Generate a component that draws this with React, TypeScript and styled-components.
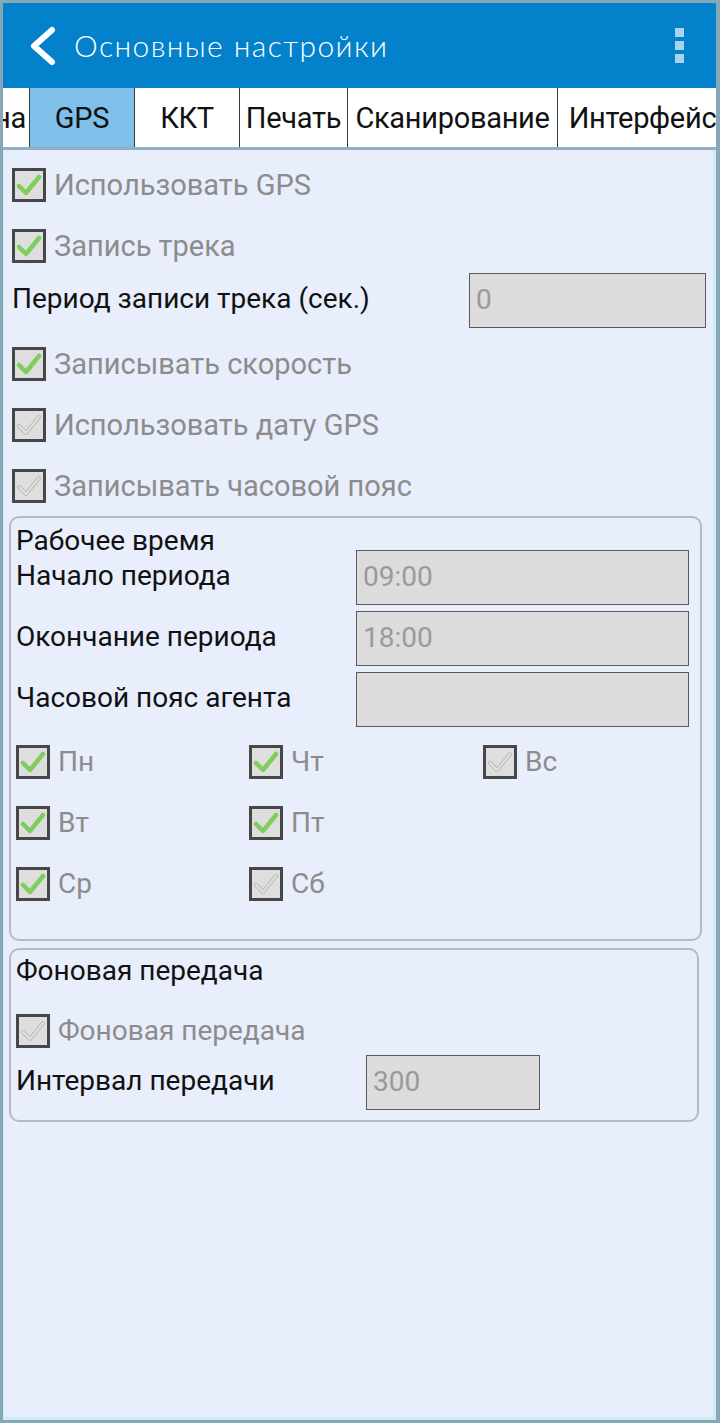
import React from "react";
import styled, { createGlobalStyle } from "styled-components";

const GlobalStyle = createGlobalStyle`
  html, body {
    margin: 0;
    padding: 0;
    background: #86a7b8;
  }
  * {
    box-sizing: border-box;
  }
`;

const Frame = styled.div`
  height: 1423px;
  padding: 3px 4px 3px 3px;
  display: flex;
  flex-direction: column;
  font-family: Roboto, "Noto Sans", sans-serif;
`;

const Header = styled.div`
  height: 85px;
  background: #0481cb;
  display: flex;
  align-items: center;
  padding: 0 0 0 22px;
  color: #fff;
`;

const Title = styled.div`
  flex: 1;
  margin-left: 13px;
  font-family: Lato, "Open Sans", sans-serif;
  font-weight: 300;
  font-size: 30px;
  letter-spacing: 1.4px;
  padding-bottom: 2px;
`;

const MenuDots = styled.div`
  width: 40px;
  display: flex;
  flex-direction: column;
  align-items: center;
  gap: 4px;
  margin-right: 17px;

  span {
    width: 9px;
    height: 9px;
    background: #a9d4f0;
  }
`;

const TabStrip = styled.div`
  background: #fff;
  display: flex;
  overflow: hidden;
  border-bottom: 3px solid #8fb0c1;
  height: 62px;
`;

const Tab = styled.div<{ $w: number; $active?: boolean; $clip?: boolean }>`
  flex: 0 0 ${(p) => p.$w}px;
  display: flex;
  align-items: center;
  justify-content: ${(p) => (p.$clip ? "flex-end" : "center")};
  overflow: hidden;
  white-space: nowrap;
  border-right: 1px solid #3a3a3a;
  background: ${(p) => (p.$active ? "#7ec0e9" : "#fff")};
  color: #111;
  font-size: 29px;
  letter-spacing: -0.3px;
  padding-right: ${(p) => (p.$clip ? "3px" : "0")};
`;

const Content = styled.div`
  flex: 1;
  background: #e8eefb;
  border-left: 1px solid #c9ecf5;
  border-right: 3px solid #c9ecf5;
  border-bottom: 3px solid #c9ecf5;
  padding: 4px 11px 0 8px;
`;

const CheckRow = styled.div`
  height: 61px;
  display: flex;
  align-items: center;
  gap: 8px;
`;

const Box = styled.div`
  width: 34px;
  height: 34px;
  border: 3px solid #474747;
  background: #dedede;
  display: flex;
  align-items: center;
  justify-content: center;
  flex: 0 0 auto;
`;

const CheckLabel = styled.span<{ $size?: number }>`
  color: #8c8c8c;
  font-size: ${(p) => p.$size ?? 29}px;
  white-space: nowrap;
`;

const FieldRow = styled.div<{ $labelW: number; $top?: number; $bottom?: number }>`
  display: grid;
  grid-template-columns: ${(p) => p.$labelW}px auto;
  align-items: center;
  height: 55px;
  margin-top: ${(p) => p.$top ?? 0}px;
  margin-bottom: ${(p) => p.$bottom ?? 0}px;
`;

const FieldLabel = styled.span<{ $size?: number }>`
  color: #111;
  font-size: ${(p) => p.$size ?? 28}px;
  white-space: nowrap;
  padding-bottom: 4px;
`;

const Input = styled.div<{ $w: number }>`
  width: ${(p) => p.$w}px;
  height: 55px;
  border: 1.5px solid #5a5a5a;
  background: #dcdcdc;
  color: #9a9a9a;
  font-size: 28px;
  display: flex;
  align-items: center;
  padding: 0 6px 2px;
`;

const Group = styled.div<{ $right: number; $top?: number }>`
  border: 2px solid #b3bcc6;
  border-radius: 10px;
  margin: ${(p) => p.$top ?? 0}px ${(p) => p.$right}px 0 -3px;
  padding: 6px 11px 0 5px;
`;

const GroupTitle = styled.div<{ $h: number }>`
  color: #111;
  font-size: 28px;
  line-height: ${(p) => p.$h}px;
`;

const Fields = styled.div`
  display: flex;
  flex-direction: column;
  gap: 6px;
  margin-top: -8px;
`;

const Days = styled.div`
  display: grid;
  grid-template-columns: 233px 234px auto;
  margin-top: 4px;
  padding-bottom: 25px;
`;

const Check = ({ on }: { on: boolean }) =>
  on ? (
    <svg width="26" height="24" viewBox="0 0 26 24">
      <path
        d="M3 13 L10 20 L23 4"
        fill="none"
        stroke="#7fce5d"
        strokeWidth="4.5"
        strokeLinecap="round"
        strokeLinejoin="round"
      />
    </svg>
  ) : (
    <svg width="26" height="24" viewBox="0 0 26 24">
      <path
        d="M3 13 L10 20 L23 4"
        fill="none"
        stroke="#bdbdbd"
        strokeWidth="4"
        strokeLinecap="round"
        strokeLinejoin="round"
      />
      <path
        d="M3 13 L10 20 L23 4"
        fill="none"
        stroke="#e4e4e4"
        strokeWidth="1.8"
        strokeLinecap="round"
        strokeLinejoin="round"
      />
    </svg>
  );

const CheckItem = ({ label, on, size }: { label: string; on: boolean; size?: number }) => (
  <CheckRow>
    <Box>
      <Check on={on} />
    </Box>
    <CheckLabel $size={size}>{label}</CheckLabel>
  </CheckRow>
);

const days: [string, boolean][] = [
  ["Пн", true],
  ["Чт", true],
  ["Вс", false],
  ["Вт", true],
  ["Пт", true],
  ["", false],
  ["Ср", true],
  ["Сб", false],
];

export default function App() {
  return (
    <>
      <GlobalStyle />
      <Frame>
        <Header>
          <svg width="36" height="40" viewBox="0 0 36 40">
            <path
              d="M27 4 L9 20 L27 36"
              fill="none"
              stroke="#fff"
              strokeWidth="6"
              strokeLinecap="round"
              strokeLinejoin="round"
            />
          </svg>
          <Title>Основные настройки</Title>
          <MenuDots>
            <span />
            <span />
            <span />
          </MenuDots>
        </Header>
        <TabStrip>
          <Tab $w={27} $clip>
            Смена
          </Tab>
          <Tab $w={105} $active>
            GPS
          </Tab>
          <Tab $w={105}>ККТ</Tab>
          <Tab $w={108}>Печать</Tab>
          <Tab $w={210}>Сканирование</Tab>
          <Tab $w={170}>Интерфейс</Tab>
        </TabStrip>
        <Content>
          <CheckItem label="Использовать GPS" on />
          <CheckItem label="Запись трека" on />
          <FieldRow $labelW={457} $top={-3} $bottom={5}>
            <FieldLabel>Период записи трека (сек.)</FieldLabel>
            <Input $w={237}>0</Input>
          </FieldRow>
          <CheckItem label="Записывать скорость" on />
          <CheckItem label="Использовать дату GPS" on={false} />
          <CheckItem label="Записывать часовой пояс" on={false} />

          <Group $right={0}>
            <GroupTitle $h={34}>Рабочее время</GroupTitle>
            <Fields>
              <FieldRow $labelW={340}>
                <FieldLabel>Начало периода</FieldLabel>
                <Input $w={333}>09:00</Input>
              </FieldRow>
              <FieldRow $labelW={340}>
                <FieldLabel>Окончание периода</FieldLabel>
                <Input $w={333}>18:00</Input>
              </FieldRow>
              <FieldRow $labelW={340}>
                <FieldLabel>Часовой пояс агента</FieldLabel>
                <Input $w={333} />
              </FieldRow>
            </Fields>
            <Days>
              {days.map(([d, on], i) =>
                d ? <CheckItem key={i} label={d} on={on} size={28} /> : <div key={i} />
              )}
            </Days>
          </Group>

          <Group $right={3} $top={7}>
            <GroupTitle $h={30}>Фоновая передача</GroupTitle>
            <div style={{ marginTop: 14 }}>
              <CheckItem label="Фоновая передача" on={false} size={28} />
            </div>
            <FieldRow $labelW={350} $top={-6}>
              <FieldLabel>Интервал передачи</FieldLabel>
              <Input $w={174}>300</Input>
            </FieldRow>
            <div style={{ height: 10 }} />
          </Group>
        </Content>
      </Frame>
    </>
  );
}
